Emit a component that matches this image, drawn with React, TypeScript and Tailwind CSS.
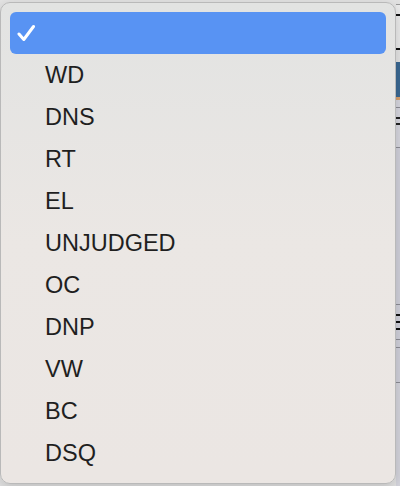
const items = ['WD', 'DNS', 'RT', 'EL', 'UNJUDGED', 'OC', 'DNP', 'VW', 'BC', 'DSQ'];

function Check() {
  return (
    <svg width="19" height="18" viewBox="0 0 19 18" fill="none">
      <path d="M2 10 L6.8 15.5 L16.5 2.5" stroke="white" strokeWidth="3" strokeLinecap="round" strokeLinejoin="round" />
    </svg>
  );
}

// strip of the page that shows on the right of the menu
function PageEdge() {
  return (
    <div className="ml-auto flex h-full w-[4px] flex-col bg-[#d3d3dc]">
      <div className="h-[4px] bg-[#e2e2e2]" />
      <div className="h-px bg-[#9a9a9a]" />
      <div className="h-[9px] bg-[#ececec]" />
      <div className="h-[2px] bg-[#111]" />
      <div className="h-[32px] bg-[#ececec]" />
      <div className="h-[2px] bg-[#111]" />
      <div className="h-[12px] bg-[#e6e6e6]" />
      <div className="h-[35px] bg-[#3b6994]" />
      <div className="h-[3px] bg-[#d9a06c]" />
      <div className="h-[7px] bg-[#d8d8e0]" />
      <div className="h-px bg-[#8d8d96]" />
      <div className="h-[9px] bg-[#d8d8e0]" />
      <div className="h-[2px] bg-[#222]" />
      <div className="h-[4px] bg-[#d8d8e0]" />
      <div className="h-[2px] bg-[#222]" />
      <div className="h-[22px] bg-[#d8d8e0]" />
      <div className="h-px bg-[#8d8d96]" />
      <div className="h-[156px] bg-[#d2d2dc]" />
      <div className="h-px bg-[#8d8d96]" />
      <div className="h-[9px] bg-[#d2d2dc]" />
      <div className="h-[2px] bg-[#111]" />
      <div className="h-[5px] bg-[#d2d2dc]" />
      <div className="h-[2px] bg-[#111]" />
      <div className="h-[5px] bg-[#d2d2dc]" />
      <div className="h-[2px] bg-[#111]" />
      <div className="h-[9px] bg-[#d2d2dc]" />
      <div className="h-px bg-[#8d8d96]" />
      <div className="h-[7px] bg-[#d2d2dc]" />
      <div className="h-px bg-[#8d8d96]" />
      <div className="h-[34px] bg-[#d2d2dc]" />
      <div className="h-px bg-[#8d8d96]" />
      <div className="flex-1 bg-[#d6d6de]" />
    </div>
  );
}

export default function App() {
  return (
    <div className="relative flex h-[486px] w-[400px] overflow-hidden bg-[#e4e4e4] font-['Liberation_Sans',Arial,sans-serif]">
      <PageEdge />
      <div className="absolute left-0 top-[2px] h-[482px] w-[396px] rounded-[10px] border border-[#b9b9b9] bg-gradient-to-b from-[#e2e3e2] via-[#ebe7e4] to-[#ebe6e3] px-[9px] pt-[9px] shadow-[0_4px_14px_rgba(0,0,0,0.18)]">
        <div className="flex h-[42px] items-center rounded-[6px] bg-[#5893f3] pl-[7px]">
          <Check />
        </div>
        {items.map((item) => (
          <div key={item} className="flex h-[42px] items-center pl-[35px] pt-[2px] text-[23.5px] text-[#1f1f1f]">
            {item}
          </div>
        ))}
      </div>
    </div>
  );
}
